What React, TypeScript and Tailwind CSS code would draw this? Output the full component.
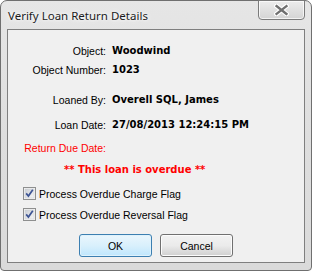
import React from 'react';

const labelFont = "font-['Liberation_Sans',Arial,sans-serif] text-[10.5px] leading-[14px]";
const valueFont = "font-['DejaVu_Sans',Verdana,sans-serif] font-bold text-[10px] leading-[14px]";

function CloseGlyph() {
  return (
    <svg width="15" height="12" viewBox="0 0 15 12" className="block">
      <path
        d="M2.5 2 L12.5 10 M12.5 2 L2.5 10"
        stroke="#ffffff"
        strokeWidth="4.6"
        strokeLinecap="square"
      />
      <path
        d="M2.5 2 L12.5 10 M12.5 2 L2.5 10"
        stroke="#707070"
        strokeWidth="2.3"
        strokeLinecap="square"
      />
    </svg>
  );
}

function Checkbox() {
  return (
    <svg width="13" height="13" viewBox="0 0 13 13" className="block shrink-0">
      <defs>
        <linearGradient id="cbFill" x1="0" y1="0" x2="1" y2="1">
          <stop offset="0" stopColor="#cbcfd5" />
          <stop offset="1" stopColor="#f6f6f6" />
        </linearGradient>
      </defs>
      <rect x="0.5" y="0.5" width="12" height="12" fill="#f4f4f4" stroke="#8e8f8f" />
      <rect x="2" y="2" width="9" height="9" fill="url(#cbFill)" stroke="#c6cad0" strokeWidth="0.5" />
      <path d="M3.2 6.4 L5.4 9 L9.8 2.8" fill="none" stroke="#3d5494" strokeWidth="1.7" />
    </svg>
  );
}

function Row({ label, value, red }: { label: string; value?: string; red?: boolean }) {
  return (
    <div className="flex h-[14px] items-center">
      <div className={`${labelFont} w-[98px] text-right whitespace-nowrap ${red ? 'text-[#ff0000]' : 'text-black'}`}>
        {label}
      </div>
      {value && <div className={`${valueFont} ml-[6px] whitespace-nowrap text-black`}>{value}</div>}
    </div>
  );
}

function CheckRow({ label }: { label: string }) {
  return (
    <div className="flex h-[13px] items-center ml-[15px]">
      <Checkbox />
      <span className={`${labelFont} ml-[3px] text-black whitespace-nowrap`}>{label}</span>
    </div>
  );
}

export default function App() {
  return (
    <div className="w-[312px] h-[271px] bg-white">
      <div className="relative w-[312px] h-[271px] flex flex-col rounded-t-[7px] rounded-b-[4px] border border-[#6f6f6f] bg-gradient-to-b from-[#e6e6e6] via-[#dedede] to-[#dadada] px-[6px] pb-[7px]">
        {/* title bar */}
        <div className="h-[28px] shrink-0 flex items-center pl-[1px]">
          <span className="font-['Noto_Sans',sans-serif] text-[11.5px] text-[#1c1c1c] [text-shadow:0_0_6px_#ffffff,0_0_3px_#ffffff] mt-[1px]">
            Verify Loan Return Details
          </span>
        </div>

        <button className="absolute left-[257px] top-[-1px] w-[47px] h-[20px] flex items-center justify-center rounded-b-[4px] border border-[#7b7b7b] bg-gradient-to-b from-[#ededed] to-[#d4d4d4] shadow-[inset_0_0_0_1px_rgba(255,255,255,0.7)]">
          <CloseGlyph />
        </button>

        {/* client area */}
        <div className="flex-1 flex flex-col border border-[#7f7f7f] bg-[#f0f0f0] pt-[14px]">
          <Row label="Object:" value="Woodwind" />
          <div className="mt-[5px]">
            <Row label="Object Number:" value="1023" />
          </div>
          <div className="mt-[16px]">
            <Row label="Loaned By:" value="Overell SQL, James" />
          </div>
          <div className="mt-[11px]">
            <Row label="Loan Date:" value="27/08/2013 12:24:15 PM" />
          </div>
          <div className="mt-[9px]">
            <Row label="Return Due Date:" red />
          </div>
          <div className={`${valueFont} mt-[8px] h-[14px] pl-[56px] text-[#ff0000] whitespace-nowrap`}>
            ** This loan is overdue **
          </div>
          <div className="mt-[10px]">
            <CheckRow label="Process Overdue Charge Flag" />
          </div>
          <div className="mt-[8px]">
            <CheckRow label="Process Overdue Reversal Flag" />
          </div>
          <div className="mt-[13px] flex justify-center gap-[8px]">
            <button className={`${labelFont} w-[73px] h-[23px] rounded-[3px] border border-[#3c7fb1] bg-gradient-to-b from-[#eaf6fd] via-[#d9f0fc] to-[#bee6fd] text-black shadow-[inset_0_0_0_1px_#dff2fc]`}>
              OK
            </button>
            <button className={`${labelFont} w-[73px] h-[23px] rounded-[3px] border border-[#707070] bg-gradient-to-b from-[#f2f2f2] via-[#ebebeb] to-[#cfcfcf] text-black shadow-[inset_0_0_0_1px_#fcfcfc]`}>
              Cancel
            </button>
          </div>
        </div>
      </div>
    </div>
  );
}
